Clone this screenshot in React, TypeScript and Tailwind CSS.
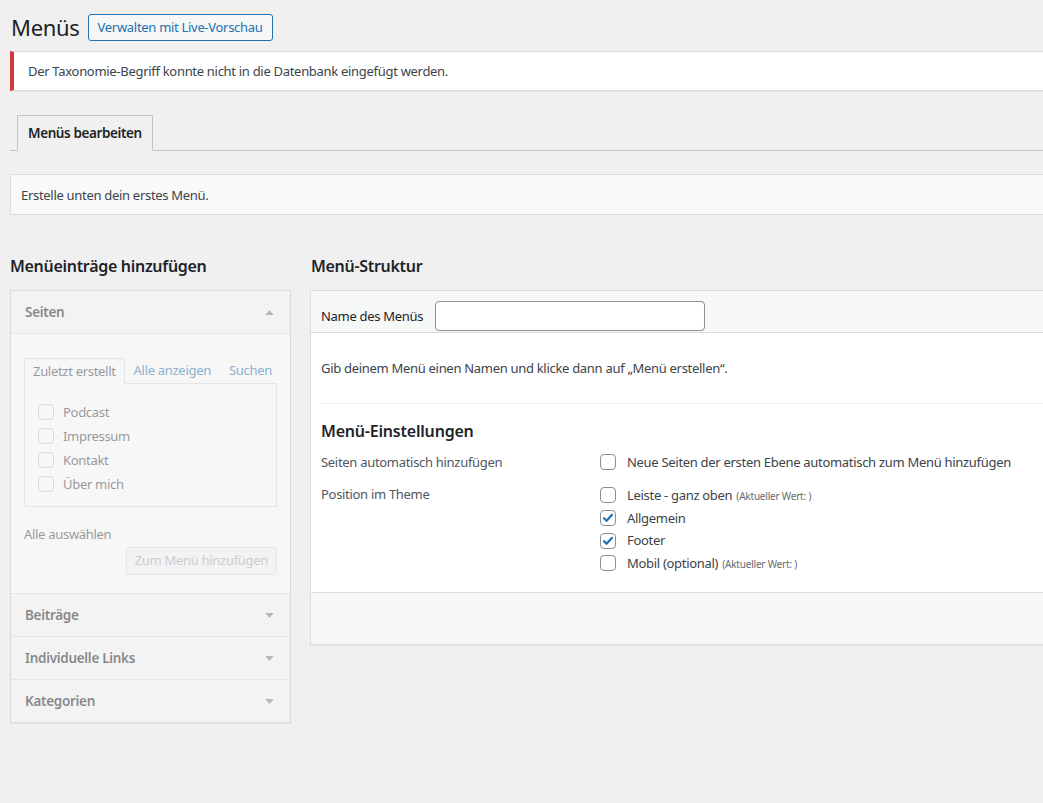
import React from "react";

const font = { fontFamily: '"Noto Sans", "Open Sans", sans-serif' };

function Check({ checked }: { checked?: boolean }) {
  return (
    <span className="flex h-[16px] w-[16px] shrink-0 items-center justify-center rounded-[4px] border border-[#8c8f94] bg-white">
      {checked && (
        <svg width="14" height="14" viewBox="0 0 14 14">
          <path d="M3 7.2l2.6 2.6L11 3.8" fill="none" stroke="#2271b1" strokeWidth="2.2" strokeLinecap="round" strokeLinejoin="round" />
        </svg>
      )}
    </span>
  );
}

function Tri({ up }: { up?: boolean }) {
  return (
    <svg width="9" height="5" viewBox="0 0 10 6" className="shrink-0">
      {up ? <path d="M0 6L5 0L10 6Z" fill="#787c82" /> : <path d="M0 0L10 0L5 6Z" fill="#787c82" />}
    </svg>
  );
}

function Section({ title }: { title: string }) {
  return (
    <div className="border-t border-[#dcdcde] bg-[#f6f7f7] opacity-50">
      <div className="flex h-[42px] items-center justify-between pl-[14px] pr-[16px] text-[13.5px] font-semibold text-[#1d2327]">
        <span className="pt-[1px]">{title}</span>
        <Tri />
      </div>
    </div>
  );
}

export default function App() {
  return (
    <div className="h-[803px] w-[1043px] overflow-hidden whitespace-nowrap bg-[#f0f0f1] text-[13px] tracking-[-0.3px] text-[#3c434a]" style={font}>
      <div className="w-[1100px] pl-[10px]">
        {/* Title row */}
        <div className="flex items-center pt-[14px]">
          <h1 className="ml-[1px] text-[22px] font-normal leading-[27px] text-[#1d2327]">Menüs</h1>
          <span className="ml-[8px] flex h-[27px] items-center rounded-[3px] border border-[#2271b1] bg-[#f6f7f7] px-[9px] pt-[1px] text-[13px] text-[#2271b1]">
            Verwalten mit Live-Vorschau
          </span>
        </div>

        {/* Error notice */}
        <div className="mt-[10px] flex h-[40px] items-center border border-l-4 border-[#dcdcde] border-l-[#d63638] bg-white pl-[14px] pt-[2px] text-[#3c434a] shadow-[0_1px_1px_rgba(0,0,0,0.04)]">
          Der Taxonomie-Begriff konnte nicht in die Datenbank eingefügt werden.
        </div>

        {/* Nav tabs */}
        <div className="mt-[24px] flex border-b border-[#c3c4c7] pl-[7px]">
          <div className="-mb-px flex h-[36px] items-center border border-b-[#f0f0f1] border-[#c3c4c7] bg-[#f0f0f1] px-[10px] pt-[1px] text-[13.5px] font-semibold tracking-[-0.4px] text-[#1d2327]">
            Menüs bearbeiten
          </div>
        </div>

        {/* Info box */}
        <div className="mt-[23px] flex h-[41px] items-center border border-[#dcdcde] bg-[#f9f9f9] pl-[10px] pt-[2px] text-[#3c434a]">
          Erstelle unten dein erstes Menü.
        </div>

        {/* Columns */}
        <div className="mt-[40px] flex gap-[19px]">
          {/* Left column */}
          <div className="w-[281px] shrink-0">
            <h2 className="mb-[13px] text-[16px] font-semibold leading-[22px] text-[#1d2327]">Menüeinträge hinzufügen</h2>
            <div className="border border-[#dcdcde] bg-[#f0f0f1] shadow-[0_1px_1px_rgba(0,0,0,0.04)]">
              <div className="opacity-50">
                <div className="flex h-[42px] items-center justify-between bg-[#f6f7f7] pl-[14px] pr-[16px] text-[13.5px] font-semibold text-[#1d2327]">
                  <span className="pt-[1px]">Seiten</span>
                  <Tri up />
                </div>
                <div className="h-[260px] border-t border-[#dcdcde] bg-white px-[13px] pt-[24px]">
                  <div className="flex items-end">
                    <div className="-mb-px flex h-[26px] items-center border border-b-white border-[#dcdcde] bg-white px-[8px] pt-[1px] text-[#3c434a]">
                      Zuletzt erstellt
                    </div>
                    <span className="ml-[9px] pb-[3px] text-[#2271b1]">Alle anzeigen</span>
                    <span className="ml-[18px] pb-[3px] text-[#2271b1]">Suchen</span>
                  </div>
                  <div className="h-[124px] border border-[#dcdcde] bg-white pl-[13px] pt-[16px]">
                    {["Podcast", "Impressum", "Kontakt", "Über mich"].map((t) => (
                      <div key={t} className="flex h-[24px] items-center gap-[9px] text-[#3c434a]">
                        <span className="h-[16px] w-[16px] rounded-[4px] border border-[#c3c4c7] bg-white" />
                        <span className="pt-[1px]">{t}</span>
                      </div>
                    ))}
                  </div>
                  <div className="mt-[18px] text-[#3c434a]">Alle auswählen</div>
                  <div className="mt-[2px] flex justify-end">
                    <span className="flex h-[28px] items-center rounded-[3px] border border-[#dcdcde] bg-[#f6f7f7] px-[8px] pt-[1px] text-[#a7aaad]">
                      Zum Menü hinzufügen
                    </span>
                  </div>
                </div>
              </div>
              <Section title="Beiträge" />
              <Section title="Individuelle Links" />
              <Section title="Kategorien" />
            </div>
          </div>

          {/* Right column */}
          <div className="flex-1">
            <h2 className="mb-[13px] ml-[1px] text-[16px] font-semibold leading-[22px] text-[#1d2327]">Menü-Struktur</h2>
            <div className="border border-[#dcdcde] bg-white shadow-[0_1px_1px_rgba(0,0,0,0.04)]">
              <div className="h-[42px] border-b border-[#dcdcde] bg-[#f6f7f7] pl-[10px] pt-[10px]">
                <div className="flex h-[30px] items-center">
                  <span className="pt-[2px] text-[#1d2327]">Name des Menüs</span>
                  <span className="ml-[12px] h-[30px] w-[270px] rounded-[4px] border border-[#8c8f94] bg-white" />
                </div>
              </div>
              <div className="h-[259px] pl-[10px]">
                <div className="pt-[26px] text-[#3c434a]">Gib deinem Menü einen Namen und klicke dann auf „Menü erstellen“.</div>
                <div className="mt-[24px] border-t border-[#f0f0f1]" />
                <h3 className="mt-[17px] text-[16px] font-semibold leading-[20px] tracking-[-0.2px] text-[#1d2327]">Menü-Einstellungen</h3>
                <div className="mt-[12px] flex">
                  <div className="w-[279px] text-[#50575e]">Seiten automatisch hinzufügen</div>
                  <div className="flex items-center gap-[11px] text-[#3c434a]">
                    <Check />
                    <span>Neue Seiten der ersten Ebene automatisch zum Menü hinzufügen</span>
                  </div>
                </div>
                <div className="mt-[13px] flex">
                  <div className="w-[279px] text-[#50575e]">Position im Theme</div>
                  <div className="-mt-[1px] flex flex-col text-[#3c434a]">
                    {[
                      { t: "Leiste - ganz oben", c: false, a: true },
                      { t: "Allgemein", c: true, a: false },
                      { t: "Footer", c: true, a: false },
                      { t: "Mobil (optional)", c: false, a: true },
                    ].map((r) => (
                      <div key={r.t} className="flex h-[22.7px] items-center gap-[11px]">
                        <Check checked={r.c} />
                        <span className="pt-[1px]">
                          {r.t}
                          {r.a && <span className="ml-[4px] text-[10px] tracking-[-0.2px] text-[#646970]">(Aktueller Wert: )</span>}
                        </span>
                      </div>
                    ))}
                  </div>
                </div>
              </div>
              <div className="h-[52px] border-t border-[#dcdcde] bg-[#f6f7f7]" />
            </div>
          </div>
        </div>
      </div>
    </div>
  );
}
